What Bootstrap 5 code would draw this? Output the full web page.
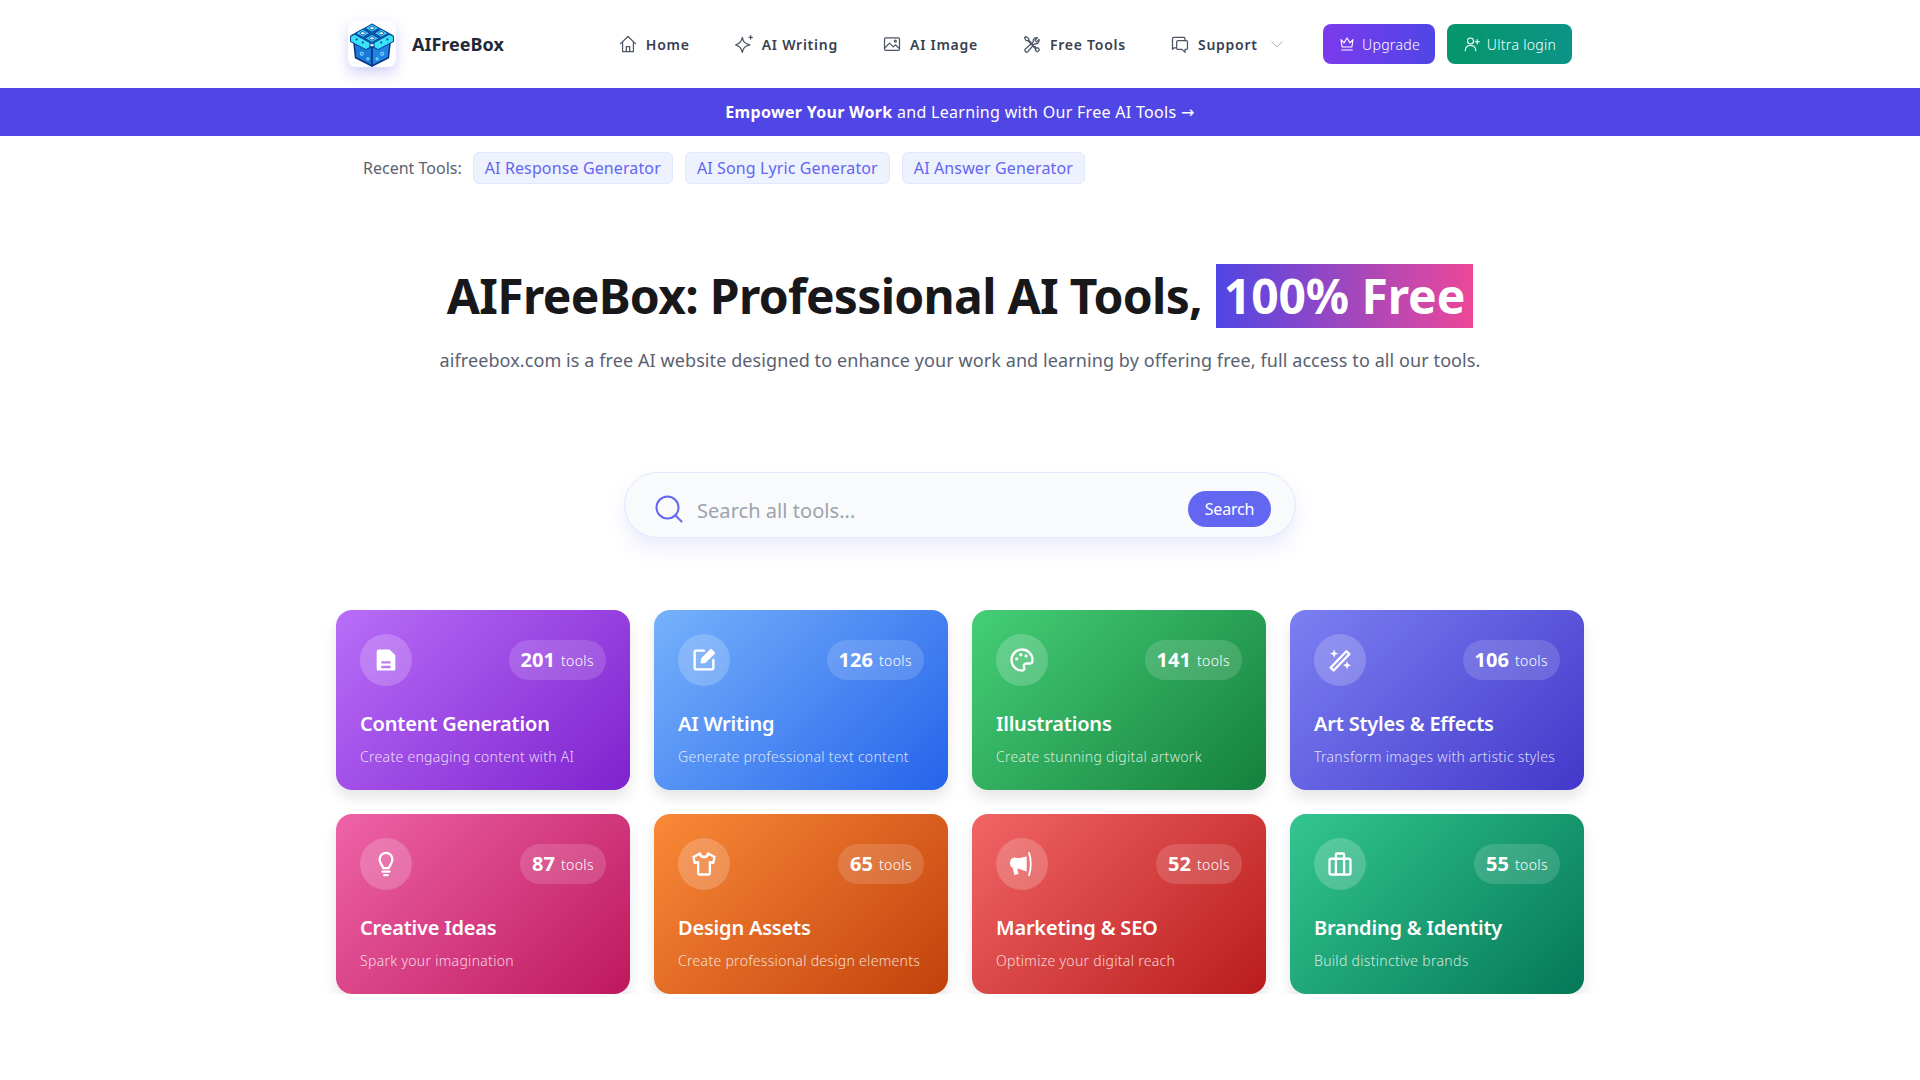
<!DOCTYPE html>
<html lang="en">
<head>
    <meta charset="UTF-8">
    <meta name="viewport" content="width=device-width, initial-scale=1.0">
    <title>AIFreeBox</title>
    <link href="https://cdn.jsdelivr.net/npm/bootstrap@5.3.2/dist/css/bootstrap.min.css" rel="stylesheet">
    <style>
        body { font-family: "Noto Sans", "Open Sans", sans-serif; color: #1f2937; background: #fff; overflow-x: hidden; }
        .site-wrap { width: 1248px; }
        .top-nav { height: 88px; padding: 0 12px; }
        .logo-tile { width: 48px; height: 46px; border-radius: 8px; background: #fff; box-shadow: 0 6px 14px rgba(79, 70, 229, .25); }
        .logo-name { font-size: 18px; font-weight: 700; color: #1f2937; margin-left: 16px; letter-spacing: 0; }
        .menu-row { margin-left: 114px; gap: 44px; }
        .menu-item { font-size: 14px; font-weight: 600; color: #374151; text-decoration: none; gap: 8px; letter-spacing: .75px; }
        .menu-item svg { width: 20px; height: 20px; stroke: #4b5563; fill: none; stroke-width: 1.5; stroke-linecap: round; stroke-linejoin: round; }
        .menu-item svg.caret-icon { width: 14px; height: 14px; stroke: #9ca3af; margin-left: 4px; }
        .top-btn { height: 40px; border-radius: 8px; color: #fff; font-size: 14px; font-weight: 300; gap: 6px; border: 0; letter-spacing: .3px; }
        .top-btn svg { width: 18px; height: 18px; stroke: #fff; fill: none; stroke-width: 1.5; stroke-linecap: round; stroke-linejoin: round; }
        .btn-upgrade { width: 112px; background: linear-gradient(90deg, #7c3aed, #4f46e5); }
        .btn-ultra { width: 125px; background: linear-gradient(90deg, #059669, #0d9488); margin-left: 12px; }
        .promo-bar { height: 48px; background: #4f46e5; color: #fff; font-size: 16px; letter-spacing: .3px; }
        .promo-arrow { font-family: "DejaVu Sans", sans-serif; }
        .recent-row { padding: 16px 0 0 27px; gap: 11px; font-size: 16px; letter-spacing: 0; color: #5b6370; }
        .recent-row .recent-chip + .recent-chip { margin-left: 1px; }
        .recent-chip { height: 32px; padding: 0 11px; font-size: 16px; color: #6366f1; background: #eef2ff; border: 1px solid #e0e7ff; border-radius: 6px; text-decoration: none; letter-spacing: .12px; }
        .hero-title { margin: 80px 0 0; font-size: 48px; line-height: 64px; font-weight: 700; color: #18181b; letter-spacing: -.7px; }
        .hero-mark { display: inline-block; margin-left: 2px; padding: 0 8px; background: linear-gradient(90deg, #4f46e5, #ec4899); color: #fff; letter-spacing: -.1px; }
        .hero-sub { margin: 18px 0 0; font-size: 18px; line-height: 28px; color: #596170; letter-spacing: .09px; }
        .search-box { width: 672px; height: 66px; margin-top: 98px; padding: 7px 24px 0 30px; border: 1px solid #e0e7ff; border-radius: 33px; background: #f9fafb; box-shadow: 0 10px 20px rgba(99, 102, 241, .12); }
        .search-box svg { width: 28px; height: 28px; stroke: #6366f1; fill: none; stroke-width: 2; stroke-linecap: round; }
        .search-hint { margin: 5px 0 0 14px; font-size: 20px; color: #9ca3af; letter-spacing: .05px; }
        .search-go { width: 83px; height: 36px; border-radius: 18px; background: #6366f1; color: #fff; font-size: 16px; border: 0; padding: 0; letter-spacing: -.2px; }
        .tool-grid { margin-top: 48px; }
        .tool-tile { height: 180px; padding: 24px; border-radius: 16px; color: #fff; box-shadow: 0 8px 14px rgba(0, 0, 0, .1); }
        .tile-icon { width: 52px; height: 52px; border-radius: 50%; background: rgba(255, 255, 255, .2); }
        .tile-icon svg { width: 28px; height: 28px; fill: none; stroke: #fff; stroke-width: 2; stroke-linecap: round; stroke-linejoin: round; }
        .tile-count { height: 40px; padding: 0 12px; border-radius: 20px; background: rgba(255, 255, 255, .15); font-size: 14px; font-weight: 300; gap: 6px; letter-spacing: .4px; }
        .tile-count strong { font-size: 20px; font-weight: 700; letter-spacing: 0; }
        .tile-title { margin: 24px 0 0; font-size: 20px; line-height: 28px; font-weight: 600; letter-spacing: -.2px; }
        .tile-desc { margin: 9px 0 0; font-size: 14px; line-height: 20px; font-weight: 300; color: rgba(255, 255, 255, .8); letter-spacing: .3px; }
        .grad-purple { background: linear-gradient(135deg, #b96ef8, #7e22ce); }
        .grad-blue { background: linear-gradient(135deg, #76b2fb, #2563eb); }
        .grad-green { background: linear-gradient(135deg, #45cf77, #15803d); }
        .grad-indigo { background: linear-gradient(135deg, #7b80f2, #4338ca); }
        .grad-pink { background: linear-gradient(135deg, #ee63a8, #be185d); }
        .grad-orange { background: linear-gradient(135deg, #f98a38, #c2410c); }
        .grad-red { background: linear-gradient(135deg, #f26565, #b91c1c); }
        .grad-emerald { background: linear-gradient(135deg, #33c68f, #047857); }
    </style>
</head>
<body>
    <div class="site-wrap mx-auto">
        <nav class="top-nav d-flex align-items-center">
            <div class="logo-tile d-flex align-items-center justify-content-center flex-shrink-0">
                <svg width="48" height="45" viewBox="0 0 46 44">
                    <path d="M23 22 44 13 23 2 2 13Z" fill="#0b5ab8"/>
                    <path d="M5 17 23 25V43L7 35Z" fill="#1a78d8" stroke="#0a3585" stroke-width="1.500" stroke-linejoin="round"/>
                    <path d="M41 17 23 25V43L39 35Z" fill="#1f84e2" stroke="#0a3585" stroke-width="1.500" stroke-linejoin="round"/>
                    <g fill="#3ccdf8" stroke="#0a4a9c" stroke-width="1">
                        <path d="M23 2 30 6 23 10 16 6Z"/>
                        <path d="M14 7 21 11 14 15 7 11Z"/>
                        <path d="M32 7 39 11 32 15 25 11Z"/>
                        <path d="M23 12 30 16 23 20 16 16Z"/>
                    </g>
                    <g fill="#38e2f8" stroke="#0a4a9c" stroke-width="1">
                        <path d="M2 14 6 12 21 20 21 25 17 27 2 19Z"/>
                        <path d="M44 14 40 12 25 20 25 25 29 27 44 19Z"/>
                    </g>
                    <g fill="#e6f9ff" stroke="#0a4aa0" stroke-width=".8">
                        <ellipse cx="23" cy="6" rx="2.400" ry="1.500"/><ellipse cx="14" cy="11" rx="2.400" ry="1.500"/><ellipse cx="32" cy="11" rx="2.400" ry="1.500"/><ellipse cx="23" cy="16" rx="2.400" ry="1.500"/>
                    </g>
                    <g fill="#0a4aa0"><circle cx="8" cy="17" r="1"/><circle cx="14" cy="20" r="1"/><circle cx="38" cy="17" r="1"/><circle cx="32" cy="20" r="1"/></g>
                    <g fill="none" stroke="#7fe0fb" stroke-width="1"><circle cx="13" cy="31" r="1.500"/><circle cx="19" cy="36" r="1.100"/><circle cx="33" cy="31" r="1.500"/><circle cx="28" cy="36" r="1.100"/></g>
                </svg>
            </div>
            <span class="logo-name">AIFreeBox</span>
            <div class="menu-row d-flex align-items-center">
                <a class="menu-item d-flex align-items-center" href="#"><svg viewBox="0 0 24 24"><path d="M3 11.500 12 3l9 8.500M5.500 9.500V21h13V9.500M10 21v-6h4v6"/></svg>Home</a>
                <a class="menu-item d-flex align-items-center" href="#"><svg viewBox="0 0 24 24"><path d="M10 4c1 5.500 3 7.500 9 9-6 1.500-8 3.500-9 9-1-5.500-3-7.500-8-9 5-1.500 7-3.500 8-9ZM20 2v4M18 4h4"/></svg>AI Writing</a>
                <a class="menu-item d-flex align-items-center" href="#"><svg viewBox="0 0 24 24"><rect x="3" y="4.500" width="18" height="15" rx="1.500"/><path d="M3.500 16.500 9 11l4.500 4.500 2.500-2.500 4.500 4"/><circle cx="16" cy="8.500" r="1.200"/></svg>AI Image</a>
                <a class="menu-item d-flex align-items-center" href="#"><svg viewBox="0 0 24 24"><path d="M3 4.500 4.500 3 8 5.500v2l9.500 9.500 1.500-.5 2 2.500-2.500 2.500-2.500-2 .5-1.500L7 8H5ZM20.500 6.500l-3 3-2-2 3-3a4 4 0 0 0-5 5L4 18a2 2 0 0 0 3 3l8.500-9.500a4 4 0 0 0 5-5Z"/></svg>Free Tools</a>
                <a class="menu-item d-flex align-items-center" href="#"><svg viewBox="0 0 24 24"><path d="M7 16.500H5l-2 2V5.500A1.500 1.500 0 0 1 4.500 4h12A1.500 1.500 0 0 1 18 5.500V8"/><path d="M9.500 8h10A1.500 1.500 0 0 1 21 9.500V17a1.500 1.500 0 0 1-1.500 1.500H18V22l-3.500-3.500h-5A1.500 1.500 0 0 1 8 17V9.500A1.500 1.500 0 0 1 9.500 8Z"/></svg>Support<svg class="caret-icon" viewBox="0 0 24 24"><path d="m3 8 9 9 9-9"/></svg></a>
            </div>
            <button class="top-btn btn-upgrade d-flex align-items-center justify-content-center ms-auto" type="button"><svg viewBox="0 0 24 24"><path d="M4 6l4 4.500 4-6.500 4 6.500L20 6l-1.500 10h-13ZM5 20h14"/></svg>Upgrade</button>
            <button class="top-btn btn-ultra d-flex align-items-center justify-content-center" type="button"><svg viewBox="0 0 24 24"><circle cx="10" cy="8" r="4"/><path d="M3 21c0-4.500 3-7 7-7s7 2.500 7 7M19 6v6M16 9h6"/></svg>Ultra login</button>
        </nav>
    </div>
    <div class="promo-bar d-flex align-items-center justify-content-center"><span><strong class="fw-bold">Empower Your Work</strong> and Learning with Our Free AI Tools <span class="promo-arrow">→</span></span></div>
    <div class="site-wrap mx-auto">
        <div class="recent-row d-flex align-items-center">
            <span>Recent Tools:</span>
            <a class="recent-chip d-flex align-items-center" href="#">AI Response Generator</a>
            <a class="recent-chip d-flex align-items-center" href="#">AI Song Lyric Generator</a>
            <a class="recent-chip d-flex align-items-center" href="#">AI Answer Generator</a>
        </div>
        <h1 class="hero-title text-center">AIFreeBox: Professional AI Tools, <span class="hero-mark">100% Free</span></h1>
        <p class="hero-sub text-center">aifreebox.com is a free AI website designed to enhance your work and learning by offering free, full access to all our tools.</p>
        <div class="search-box d-flex align-items-center mx-auto">
            <svg viewBox="0 0 28 28"><circle cx="12.500" cy="12.500" r="11"/><path d="m20.500 20.500 6 6"/></svg>
            <span class="search-hint">Search all tools...</span>
            <button class="search-go ms-auto" type="button">Search</button>
        </div>
        <div class="tool-grid row row-cols-4 g-4">
            <div class="col"><div class="tool-tile grad-purple">
                <div class="d-flex align-items-center justify-content-between">
                    <div class="tile-icon d-flex align-items-center justify-content-center"><svg viewBox="0 0 24 24" style="stroke:none"><path fill="#fff" fill-rule="evenodd" d="M6 3h9l5 5v12a1 1 0 0 1-1 1H5a1 1 0 0 1-1-1V5a2 2 0 0 1 2-2Zm2 10v2h8v-2Zm0 4v2h8v-2Z"/></svg></div>
                    <div class="tile-count d-flex align-items-center"><strong>201</strong>tools</div>
                </div>
                <h3 class="tile-title">Content Generation</h3>
                <p class="tile-desc">Create engaging content with AI</p>
            </div></div>
            <div class="col"><div class="tool-tile grad-blue">
                <div class="d-flex align-items-center justify-content-between">
                    <div class="tile-icon d-flex align-items-center justify-content-center"><svg viewBox="0 0 24 24"><path d="M12 4H5a1 1 0 0 0-1 1v14a1 1 0 0 0 1 1h14a1 1 0 0 0 1-1v-7"/><path d="M10 14l.5-3L18 3.500l2.500 2.500L13 13.500Z" fill="#fff"/></svg></div>
                    <div class="tile-count d-flex align-items-center"><strong>126</strong>tools</div>
                </div>
                <h3 class="tile-title">AI Writing</h3>
                <p class="tile-desc">Generate professional text content</p>
            </div></div>
            <div class="col"><div class="tool-tile grad-green">
                <div class="d-flex align-items-center justify-content-between">
                    <div class="tile-icon d-flex align-items-center justify-content-center"><svg viewBox="0 0 24 24"><path d="M12 3a9 9 0 1 0 0 18c2 0 2.500-1.500 1.800-2.800-.8-1.500.2-3.200 2-3.200H19c1.500 0 2-1.200 2-3 0-5-4-9-9-9Z"/><g fill="#fff" stroke="none"><circle cx="7.500" cy="11" r="1.400"/><circle cx="11" cy="7.500" r="1.400"/><circle cx="15.500" cy="8.500" r="1.400"/></g></svg></div>
                    <div class="tile-count d-flex align-items-center"><strong>141</strong>tools</div>
                </div>
                <h3 class="tile-title">Illustrations</h3>
                <p class="tile-desc">Create stunning digital artwork</p>
            </div></div>
            <div class="col"><div class="tool-tile grad-indigo">
                <div class="d-flex align-items-center justify-content-between">
                    <div class="tile-icon d-flex align-items-center justify-content-center"><svg viewBox="0 0 24 24"><path d="M4 18.500 17.500 4.500 20 7 6.500 21Z"/><g fill="#fff" stroke="none"><path d="M7 3l1 2.500L10.500 6.500 8 7.500 7 10 6 7.500 3.500 6.500 6 5.500Z"/><path d="M18 13l1 2.500 2.500 1-2.500 1-1 2.500-1-2.500-2.500-1 2.500-1Z"/></g></svg></div>
                    <div class="tile-count d-flex align-items-center"><strong>106</strong>tools</div>
                </div>
                <h3 class="tile-title">Art Styles &amp; Effects</h3>
                <p class="tile-desc">Transform images with artistic styles</p>
            </div></div>
            <div class="col"><div class="tool-tile grad-pink">
                <div class="d-flex align-items-center justify-content-between">
                    <div class="tile-icon d-flex align-items-center justify-content-center"><svg viewBox="0 0 24 24"><path d="M9.500 15.500c0-2-3-3.500-3-7.500a5.500 5.500 0 0 1 11 0c0 4-3 5.500-3 7.500ZM9 18.500h6M10.500 21.500h3"/></svg></div>
                    <div class="tile-count d-flex align-items-center"><strong>87</strong>tools</div>
                </div>
                <h3 class="tile-title">Creative Ideas</h3>
                <p class="tile-desc">Spark your imagination</p>
            </div></div>
            <div class="col"><div class="tool-tile grad-orange">
                <div class="d-flex align-items-center justify-content-between">
                    <div class="tile-icon d-flex align-items-center justify-content-center"><svg viewBox="0 0 24 24"><path d="M8.500 3 3 6l1 5 3-.5V20a1 1 0 0 0 1 1h8a1 1 0 0 0 1-1v-9.500l3 .5 1-5-5.500-3c-.5 4-6.500 4-7 0Z"/></svg></div>
                    <div class="tile-count d-flex align-items-center"><strong>65</strong>tools</div>
                </div>
                <h3 class="tile-title">Design Assets</h3>
                <p class="tile-desc">Create professional design elements</p>
            </div></div>
            <div class="col"><div class="tool-tile grad-red">
                <div class="d-flex align-items-center justify-content-between">
                    <div class="tile-icon d-flex align-items-center justify-content-center"><svg viewBox="0 0 24 24" style="stroke:none"><path fill="#fff" d="M16 5.500v13L9 16H8l1 4.500-3.500 1-1.500-6a5 5 0 0 1 1-9L9 7Z"/><path fill="none" stroke="#fff" stroke-width="1.600" d="M18 2.500c2 5 2 14 0 19"/></svg></div>
                    <div class="tile-count d-flex align-items-center"><strong>52</strong>tools</div>
                </div>
                <h3 class="tile-title">Marketing &amp; SEO</h3>
                <p class="tile-desc">Optimize your digital reach</p>
            </div></div>
            <div class="col"><div class="tool-tile grad-emerald">
                <div class="d-flex align-items-center justify-content-between">
                    <div class="tile-icon d-flex align-items-center justify-content-center"><svg viewBox="0 0 24 24"><rect x="3" y="7.500" width="18" height="13.500" rx="1.500"/><path d="M8.500 7.500V4a1 1 0 0 1 1-1h5a1 1 0 0 1 1 1v3.500M8.500 7.500V21M15.500 7.500V21"/></svg></div>
                    <div class="tile-count d-flex align-items-center"><strong>55</strong>tools</div>
                </div>
                <h3 class="tile-title">Branding &amp; Identity</h3>
                <p class="tile-desc">Build distinctive brands</p>
            </div></div>
        </div>
    </div>
    <script src="https://cdn.jsdelivr.net/npm/bootstrap@5.3.2/dist/js/bootstrap.bundle.min.js"></script>
</body>
</html>
